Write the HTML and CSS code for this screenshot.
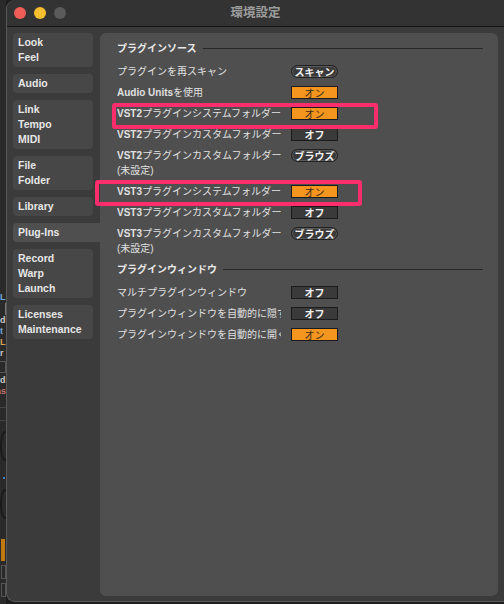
FILE: index.html
```html
<!DOCTYPE html>
<html lang="ja">
<head>
<meta charset="utf-8">
<title>環境設定</title>
<link rel="stylesheet" href="styles.css">
</head>
<body>
<div class="screen">
  <div class="strip">
    <div class="bits">
      <span class="bit c-blue">L</span>
      <span class="bit c-line"></span>
      <span class="bit c-light">d</span>
      <span class="bit c-blue">t</span>
      <span class="bit c-orange">L</span>
      <span class="bit c-light">r</span>
      <span class="bit c-box"></span>
      <span class="bit c-light">d</span>
      <span class="bit c-red">as</span>
      <span class="bit c-rule"></span>
      <span class="bit c-knob"></span>
      <span class="bit c-dot"></span>
      <span class="bit c-knob"></span>
      <span class="bit c-bar"></span>
      <span class="bit c-box2"></span>
      <span class="bit c-box2"></span>
    </div>
  </div>
  <div class="window">
    <div class="titlebar">
      <div class="lights">
        <span class="light red"></span>
        <span class="light yellow"></span>
        <span class="light grey"></span>
      </div>
      <div class="title">環境設定</div>
      <div class="spacer"></div>
    </div>
    <div class="body">
      <nav class="sidebar">
        <div class="tab">Look<br>Feel</div>
        <div class="tab">Audio</div>
        <div class="tab">Link<br>Tempo<br>MIDI</div>
        <div class="tab">File<br>Folder</div>
        <div class="tab">Library</div>
        <div class="tab active">Plug-Ins</div>
        <div class="tab">Record<br>Warp<br>Launch</div>
        <div class="tab">Licenses<br>Maintenance</div>
      </nav>
      <main class="panel">
        <div class="section-head first"><span>プラグインソース</span><i class="rule"></i></div>
        <div class="row"><div class="label">プラグインを再スキャン</div><div class="btn pill">スキャン</div></div>
        <div class="row"><div class="label"><b>Audio Units</b>を使用</div><div class="btn on">オン</div></div>
        <div class="row"><div class="label"><b>VST2</b>プラグインシステムフォルダー</div><div class="btn on">オン</div></div>
        <div class="row"><div class="label"><b>VST2</b>プラグインカスタムフォルダー</div><div class="btn off">オフ</div></div>
        <div class="row"><div class="label"><b>VST2</b>プラグインカスタムフォルダー<br>(未設定)</div><div class="btn pill">ブラウズ</div></div>
        <div class="row"><div class="label"><b>VST3</b>プラグインシステムフォルダー</div><div class="btn on">オン</div></div>
        <div class="row"><div class="label"><b>VST3</b>プラグインカスタムフォルダー</div><div class="btn off">オフ</div></div>
        <div class="row"><div class="label"><b>VST3</b>プラグインカスタムフォルダー<br>(未設定)</div><div class="btn pill">ブラウズ</div></div>

        <div class="section-head second"><span>プラグインウィンドウ</span><i class="rule"></i></div>
        <div class="row"><div class="label">マルチプラグインウィンドウ</div><div class="btn off">オフ</div></div>
        <div class="row"><div class="label">プラグインウィンドウを自動的に隠す</div><div class="btn off">オフ</div></div>
        <div class="row"><div class="label">プラグインウィンドウを自動的に開く</div><div class="btn on">オン</div></div>

        <div class="mark mark-a"></div>
        <div class="mark mark-b"></div>
      </main>
    </div>
  </div>
</div>
</body>
</html>
```
FILE: styles.css
```css
* { box-sizing: border-box; }
html, body { margin: 0; padding: 0; }
body {
  width: 504px;
  height: 604px;
  overflow: hidden;
  background: #1e1e1e;
  font-family: "Liberation Sans", "Noto Sans CJK JP", sans-serif;
}
.screen {
  display: flex;
  width: 504px;
  height: 604px;
}
.strip {
  width: 6px;
  flex: none;
  background: #2a2a2a;
  overflow: hidden;
  position: relative;
}
.bits {
  display: flex;
  flex-direction: column;
  align-items: flex-end;
  padding-top: 292px;
  width: 6px;
}
.bit {
  display: block;
  font: bold 9px/11px "Liberation Sans", sans-serif;
  white-space: nowrap;
  direction: rtl;
  width: 6px;
  overflow: hidden;
  text-align: left;
  flex: none;
}
.c-blue { color: #6fa8d8; }
.c-light { color: #c9c9c9; }
.c-orange { color: #d9a35a; }
.c-red { color: #c07070; }
.c-line { height: 12px; border-right: 1px solid #777; width: 3px; }
.c-box { height: 12px; border: 1px solid #555; border-left: none; margin: 2px 0; }
.c-rule { height: 14px; border-top: 1px solid #444; border-bottom: 1px solid #444; margin-top: 10px; }
.c-knob { height: 30px; border: 2px solid #1a1a1a; border-radius: 50%; margin: 10px -4px 10px 0; width: 10px; }
.c-dot { height: 2px; width: 2px; background: #3c80c0; margin: 6px 1px 0 0; }
.c-bar { height: 22px; width: 4px; background: #c07a10; margin: 10px 1px 0 0; }
.c-box2 { height: 14px; border: 1px solid #555; margin-top: 4px; width: 5px; }

.window {
  flex: 1;
  height: 602px;
  background: #3b3b3b;
  border-left: 1px solid #5a5a5a;
  border-bottom: 1px solid #5a5a5a;
  border-radius: 9px 0 0 9px;
  display: flex;
  flex-direction: column;
  overflow: hidden;
}
.titlebar {
  height: 27px;
  flex: none;
  background: #333333;
  border-bottom: 1px solid #151515;
  display: grid;
  grid-template-columns: 1fr auto 1fr;
  align-items: center;
}
.lights {
  display: flex;
  gap: 8px;
  padding-left: 7px;
  margin-top: -1px;
}
.light {
  width: 12px;
  height: 12px;
  border-radius: 50%;
  display: block;
}
.red { background: #ee5e57; }
.yellow { background: #f5be2f; }
.grey { background: #5b5b5b; }
.title {
  font: bold 12.5px/14px "Noto Sans CJK JP", sans-serif;
  color: #9c9c9c;
  margin-top: -2px;
}
.body {
  flex: 1;
  display: flex;
  gap: 7px;
  padding: 6px 6px 5px 6px;
  min-height: 0;
}
.sidebar {
  width: 80px;
  flex: none;
  display: flex;
  flex-direction: column;
  gap: 7px;
}
.tab {
  background: #474747;
  border-radius: 4px;
  padding: 2px 5px;
  color: #e6e6e6;
  font: bold 10.5px/15px "Liberation Sans", sans-serif;
}
.tab.active {
  background: #4f4f4f;
  margin-right: -7px;
  border-radius: 4px 0 0 4px;
}
.panel {
  flex: 1;
  position: relative;
  background: #4f4f4f;
  border-radius: 6px;
  padding: 0 15px 0 17px;
  color: #e2e2e2;
}
.section-head {
  display: flex;
  align-items: center;
  gap: 6px;
  font: bold 10px/14px "Noto Sans CJK JP", sans-serif;
  color: #e8e8e8;
  margin: 5px 0 6px;
}
.section-head.first { margin-top: 8px; }
.section-head.second { margin-top: 3px; }
.rule {
  flex: 1;
  height: 1px;
  background: #262626;
  display: block;
}
.row {
  display: flex;
  align-items: flex-start;
  gap: 10px;
  padding: 3px 0;
}
.label {
  width: 164px;
  flex: none;
  white-space: nowrap;
  overflow: hidden;
  font: 10px/15px "Liberation Sans", "Noto Sans CJK JP", sans-serif;
  color: #e0e0e0;
}
.label b {
  font-weight: bold;
}
.btn {
  width: 47px;
  height: 13px;
  margin-top: 1px;
  border: 1px solid #1b1b1b;
  font: 10px/11px "Noto Sans CJK JP", sans-serif;
  text-align: center;
  flex: none;
}
.btn.on {
  background: #f4951f;
  color: #3a2a16;
}
.btn.off {
  background: #3a3a3a;
  color: #f0f0f0;
  font-weight: bold;
}
.btn.pill {
  background: #3a3a3a;
  color: #f0f0f0;
  font-weight: bold;
  border-radius: 7px;
  border-color: #202020;
  box-shadow: inset 0 0 0 1px #5a5a5a;
}
.mark {
  position: absolute;
  border: 4px solid #fb2d6c;
  border-radius: 3px;
  height: 26px;
}
.mark-a {
  left: 12px;
  top: 70px;
  width: 266px;
}
.mark-b {
  left: -5px;
  top: 147px;
  width: 267px;
}
```
